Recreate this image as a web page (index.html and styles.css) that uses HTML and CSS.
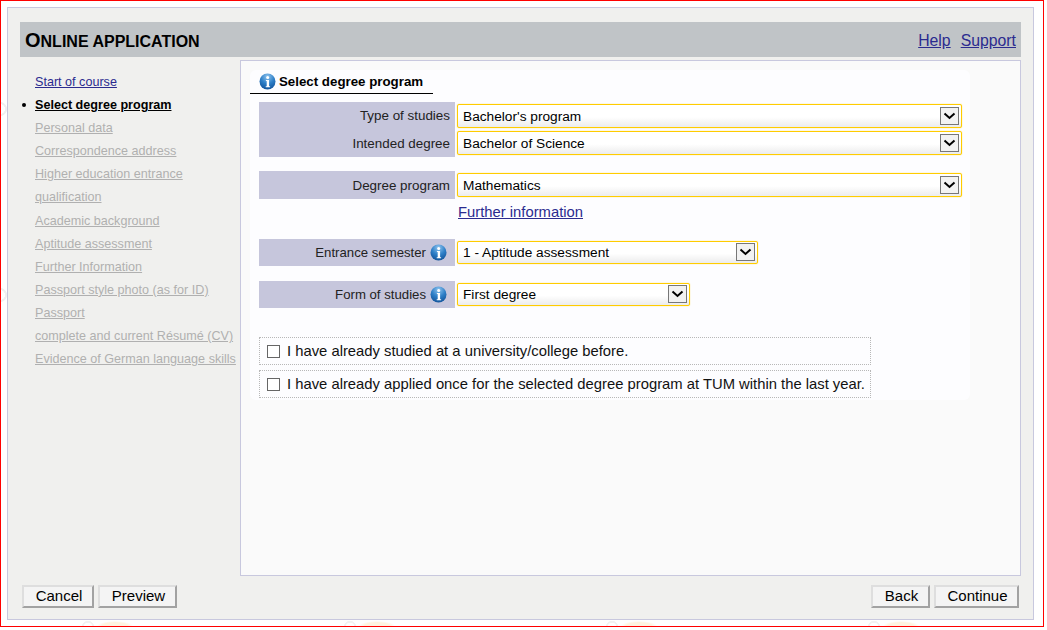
FILE: index.html
```html
<!DOCTYPE html>
<html lang="en">
<head>
<meta charset="utf-8">
<title>Online application</title>
<link rel="stylesheet" href="styles.css">
</head>
<body>
<svg class="defs" width="0" height="0" aria-hidden="true">
  <defs>
    <radialGradient id="infoFill" cx="0.5" cy="0.2" r="0.85">
      <stop offset="0" stop-color="#8fc4ee"/>
      <stop offset="0.5" stop-color="#2f80c8"/>
      <stop offset="1" stop-color="#0f4f96"/>
    </radialGradient>
    <symbol id="info" viewBox="0 0 17 17">
      <circle cx="8.5" cy="8.5" r="8" fill="url(#infoFill)"/>
      <circle cx="8.7" cy="4.4" r="1.5" fill="#fff"/>
      <path d="M6.9 7h3.2v6.2h1v1H6.7v-1h1V8h-.8z" fill="#fff"/>
    </symbol>
    <symbol id="chev" viewBox="0 0 17 16">
      <path d="M3.5 5.5 8.5 10 13.5 5.5" fill="none" stroke="#000" stroke-width="2"/>
    </symbol>
  </defs>
</svg>
<div class="frame">
  <div class="panel">
    <header class="head">
      <h1 class="title">Online application</h1>
      <nav class="head-links"><a href="#">Help</a><a href="#">Support</a></nav>
    </header>
    <div class="main">
      <ul class="steps">
        <li><a href="#" class="step-link">Start of course</a></li>
        <li class="current"><a href="#" class="step-link">Select degree program</a></li>
        <li><a href="#" class="step-off">Personal data</a></li>
        <li><a href="#" class="step-off">Correspondence address</a></li>
        <li><a href="#" class="step-off">Higher education entrance qualification</a></li>
        <li><a href="#" class="step-off">Academic background</a></li>
        <li><a href="#" class="step-off">Aptitude assessment</a></li>
        <li><a href="#" class="step-off">Further Information</a></li>
        <li><a href="#" class="step-off">Passport style photo (as for ID)</a></li>
        <li><a href="#" class="step-off">Passport</a></li>
        <li><a href="#" class="step-off">complete and current Résumé (CV)</a></li>
        <li><a href="#" class="step-off">Evidence of German language skills</a></li>
      </ul>
      <section class="content">
        <div class="card">
          <h2 class="tab"><svg class="info"><use href="#info"/></svg>Select degree program</h2>
          <form class="form">
            <div class="group group-a">
              <div class="labels">
                <label class="lab">Type of studies</label>
                <label class="lab">Intended degree</label>
              </div>
              <div class="fields">
                <div class="sel sel-full"><select><option>Bachelor's program</option></select><svg class="arrow"><use href="#chev"/></svg></div>
                <div class="sel sel-full"><select><option>Bachelor of Science</option></select><svg class="arrow"><use href="#chev"/></svg></div>
              </div>
            </div>
            <div class="group group-b">
              <div class="labels"><label class="lab">Degree program</label></div>
              <div class="fields">
                <div class="sel sel-full"><select><option>Mathematics</option></select><svg class="arrow"><use href="#chev"/></svg></div>
              </div>
            </div>
            <a href="#" class="further">Further information</a>
            <div class="group group-c">
              <div class="labels"><label class="lab lab-info">Entrance semester<svg class="info"><use href="#info"/></svg></label></div>
              <div class="fields">
                <div class="sel sel-mid"><select><option>1 - Aptitude assessment</option></select><svg class="arrow"><use href="#chev"/></svg></div>
              </div>
            </div>
            <div class="group group-d">
              <div class="labels"><label class="lab lab-info">Form of studies<svg class="info"><use href="#info"/></svg></label></div>
              <div class="fields">
                <div class="sel sel-small"><select><option>First degree</option></select><svg class="arrow"><use href="#chev"/></svg></div>
              </div>
            </div>
            <div class="checks">
              <label class="check"><input type="checkbox">I have already studied at a university/college before.</label>
              <label class="check"><input type="checkbox">I have already applied once for the selected degree program at TUM within the last year.</label>
            </div>
          </form>
        </div>
      </section>
    </div>
    <footer class="foot">
      <div class="btns"><button class="btn btn-cancel">Cancel</button><button class="btn btn-preview">Preview</button></div>
      <div class="btns"><button class="btn btn-back">Back</button><button class="btn btn-next">Continue</button></div>
    </footer>
  </div>
</div>
</body>
</html>
```
FILE: styles.css
```css
* { box-sizing: border-box; }
html, body { margin: 0; padding: 0; height: 100%; background: #fff; overflow: hidden; }
body { font-family: "Liberation Sans", Arial, sans-serif; color: #000; }
.defs { position: absolute; }
a { color: #2b2b8f; }

.frame {
  width: 1044px; height: 627px;
  border: 1px solid #f00;
  padding: 6px 9px 6px 6px;
  background:
    radial-gradient(ellipse 18px 5px at 34px 6px, #fef3e0 0 70%, transparent 100%) 80px 100% / 262px 6px repeat-x,
    radial-gradient(circle 7px at 7px 7px, transparent 60%, #f2f2f2 65% 85%, transparent 90%) 80px 100% / 262px 6px repeat-x,
    radial-gradient(circle 8px at -1px 8px, transparent 60%, #f0f0f0 65% 85%, transparent 90%) 0 100px / 6px 16px no-repeat,
    radial-gradient(circle 8px at -1px 8px, transparent 60%, #f0f0f0 65% 85%, transparent 90%) 0 286px / 6px 16px no-repeat,
    #fff;
}
.panel {
  height: 613px;
  border: 1px solid #c8c8de;
  background: #f0f0ee;
  padding: 14px 12px 0;
  display: flex; flex-direction: column;
}
.head {
  height: 35px; flex: none;
  background: #c0c4c7;
  display: flex; justify-content: space-between; align-items: center;
  padding: 2px 5px 0;
}
.title {
  margin: 0;
  font-size: 16px; font-weight: bold;
  text-transform: uppercase;
}
.title::first-letter { font-size: 20px; }
.head-links { display: flex; gap: 10px; font-size: 15.8px; }

.main { flex: none; height: 516px; margin-top: 3px; display: flex; }
.steps {
  list-style: none; margin: 0;
  width: 220px; flex: none;
  padding: 11px 0 0 15px;
  font-size: 12.6px; line-height: 23.1px;
}
.steps li { position: relative; }
.current { font-weight: bold; }
.current::before {
  content: ""; position: absolute; left: -13px; top: 9px;
  width: 4px; height: 4px; border-radius: 50%; background: #000;
}
.step-link { color: #2b2b8f; }
.current .step-link { color: #000; }
.step-off { color: #b0b0b0; }

.content {
  flex: 1;
  background: #fafafa;
  border: 1px solid #c8c8de;
  padding: 9px 50px 0 9px;
}
.card { background: #fdfdff; height: 330px; border-radius: 6px; }
.tab {
  margin: 0; width: 183px; height: 24px;
  display: flex; align-items: center; gap: 3px;
  padding: 0 0 0 9px;
  font-size: 13.3px; font-weight: bold;
  border-bottom: 1px solid #000;
}
.info { width: 17px; height: 17px; flex: none; }
.form { display: flex; flex-direction: column; padding: 8px 0 0 9px; font-size: 14px; }

.group { display: flex; gap: 2px; }
.labels {
  width: 196px; flex: none;
  background: #c6c6dc;
  display: flex; flex-direction: column; justify-content: space-around;
  padding: 0 5px;
  font-size: 13.4px; color: #222;
}
.lab { display: flex; justify-content: flex-end; align-items: center; gap: 4px; height: 27px; }
.lab-info { padding-right: 3px; font-size: 13.2px; }
.group-a .labels { height: 55px; }
.group-b { margin-top: 14px; }
.group-b .labels { height: 28px; }
.group-c { margin-top: 18px; }
.group-c .labels, .group-d .labels { height: 27px; }
.group-d { margin-top: 15px; }
.fields { display: flex; flex-direction: column; gap: 3px; padding-top: 2px; }

.sel { position: relative; height: 24px; }
.sel-full { width: 505px; }
.sel-mid { width: 301px; }
.sel-small { width: 233px; }
.group-c .sel, .group-d .sel { height: 23px; }
.sel select {
  appearance: none; display: block;
  width: 100%; height: 100%;
  border: 1px solid #fc0; border-radius: 2px;
  box-shadow: 0 0 1px #fc0;
  background: linear-gradient(#fff 0, #fff 55%, #ececec 100%);
  font: 13.7px "Liberation Sans", Arial, sans-serif; color: #000;
  padding: 1px 0 0 5px;
}
.group-c .sel select, .group-d .sel select { padding-top: 0; }
.group-c .arrow, .group-d .arrow { top: 2px; }
.arrow {
  position: absolute; right: 3px; top: 3px;
  width: 19px; height: 18px;
  border: 1px solid #777; background: #f2f2f2;
  pointer-events: none;
}
.further { margin: 4px 0 0 199px; font-size: 14.8px; line-height: 18px; }

.checks { display: flex; flex-direction: column; gap: 5px; margin-top: 29px; }
.check {
  width: 612px; height: 28px;
  border: 1px dotted #b8b8b8;
  display: flex; align-items: center;
  padding-left: 7px;
  font-size: 14.8px; color: #111;
}
.check input {
  appearance: none; margin: 0 7px 0 0;
  width: 13px; height: 13px;
  border: 1px solid #666; background: #fff; border-radius: 0;
}

.foot { display: flex; justify-content: space-between; padding: 9px 2px 0; }
.btns { display: flex; gap: 4px; }
.btn {
  height: 23px; padding: 0 0 2px 2px;
  font: 15px "Liberation Sans", Arial, sans-serif; color: #000;
  background: #f4f4f4;
  border: 2px solid; border-color: #dedede #a2a2a2 #a2a2a2 #dedede;
}
.btn-cancel { width: 72px; }
.btn-preview { width: 79px; }
.btn-back { width: 59px; }
.btn-next { width: 85px; }
```
